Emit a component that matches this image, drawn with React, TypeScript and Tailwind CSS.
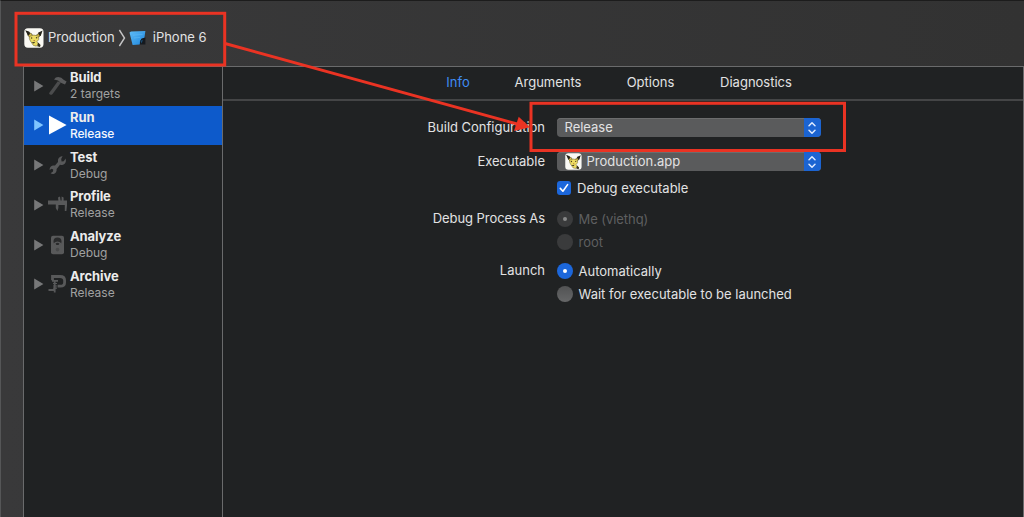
import React from "react";

type Scheme = { name: string; detail: string; icon: React.ReactNode; selected?: boolean };

const Hammer = () => (
  <svg width="20" height="20" viewBox="0 0 20 20">
    <path d="M9.8 5.2 12.8 6.8 4.4 18.2Q2.2 19.6 1 17.2Z" fill="#4b4c4d" />
    <path d="M6 3.4 7.8 1.4Q13 .2 15.6 3.8L18.6 5.4 17 8.6 14.6 7.4 12.4 6.6 10 4.6Z" fill="#5a5b5c" />
  </svg>
);
const Play = () => (
  <svg width="20" height="20" viewBox="0 0 20 20" fill="#fff">
    <path d="M1 .6 18.6 10 1 19.4Z" />
  </svg>
);
const Wrench = () => (
  <svg width="20" height="20" viewBox="0 0 20 20" fill="#58595a">
    <path d="M14.6 1 13.2 4 13.6 6.4 15.8 6.2 17.6 3.4Q18.8 7.6 15.6 9.4 13.4 10.2 12 9.8L8.6 14Q9 17.2 6.2 18.8 4 19.4 2.6 18.2L5 16.6 5.2 14.6 3.6 13.8 1.6 15Q1.6 11.4 5 10.6 6.2 10.4 7 10.6L10 7Q9.2 2.2 14.6 1Z" />
  </svg>
);
const Caliper = () => (
  <svg width="20" height="20" viewBox="0 0 20 20" fill="#58595a">
    <path d="M0 5.6H10.4L10 2.4 12 1.6 12.6 5.6H13.6V1.6L15.6 2.4V5.6H19V10.4L18.4 16 16.8 16V10H10.4V13L9.4 16 7.8 13V9.4H0Z" />
  </svg>
);
const Gauge = () => (
  <svg width="20" height="20" viewBox="0 0 20 20">
    <rect x="3" y=".7" width="13" height="18.6" rx="2" fill="#58595a" />
    <circle cx="9.5" cy="6.4" r="4" fill="#292a2b" />
    <path d="M5.6 8.2Q9.5 5 13.4 8.2L12.4 11H6.6Z" fill="#58595a" />
    <path d="M7.6 8.6Q9.5 7 11.4 8.6L10.6 10H8.4Z" fill="#292a2b" />
    <circle cx="9.5" cy="14.6" r="1.8" fill="#48494a" />
  </svg>
);
const Clamp = () => (
  <svg width="20" height="20" viewBox="0 0 20 20" fill="none" stroke="#58595a">
    <path d="M4.5 6.2V2.5H12Q16.6 2.5 16.6 6.5V8.5Q16.6 12.2 12.5 12.2H9.6" strokeWidth="2.8" />
    <path d="M6.7 6.5V18.5M.5 16H7.5M4 6.8H10" strokeWidth="1.8" />
    <path d="M5 9.5H9M5 12H9M5 14.2H9" strokeWidth="1.2" />
  </svg>
);

const AppIcon = ({ size }: { size: number }) => (
  <svg width={size} height={size} viewBox="0 0 20 20" className="shrink-0">
    <rect x=".3" y=".3" width="19.2" height="19.4" rx="3.6" fill="#faf9f4" />
    <path d="M3.2 3.6 8 6 8.6 9 6 9.6 4 7.4ZM17 4.4 12.6 6.8 12 9 14.4 9.4 16.4 7.6Z" fill="#d9c04c" stroke="#3c351d" strokeWidth=".6" />
    <path d="M1.2 2.2 5.4 3.8 6 6 4.2 7.8ZM18.6 2.6 14 4.8 15.2 7.6 16.6 8Z" fill="#24231b" />
    <path d="M5.4 8.4Q9.8 5.8 14.6 8.2L14.8 11.4 13 13.6 14.2 16 12.4 18.2 9.4 17.4 6.4 13Q4.8 10.4 5.4 8.4Z" fill="#ecdc62" stroke="#5b5026" strokeWidth=".5" />
    <path d="M7.4 14.4 11.4 13.8 9.8 15.6ZM14.2 14.6 16.6 17 16 19 13.2 18.2Z" fill="#34301c" />
    <circle cx="7.6" cy="10" r=".8" fill="#4b3e1b" />
    <circle cx="12.6" cy="9.8" r=".8" fill="#4b3e1b" />
    <path d="M9.2 12H11.2L10.2 12.9Z" fill="#a6512f" />
  </svg>
);

const XcodeIcon = () => (
  <svg width="18" height="16" viewBox="0 0 18 16" className="shrink-0">
    <defs>
      <linearGradient id="sheet" x1="0" y1="0" x2="1" y2="1">
        <stop offset="0" stopColor="#5fbcf6" />
        <stop offset="1" stopColor="#1c84dc" />
      </linearGradient>
    </defs>
    <path d="M10 8 16.4 7.5V14.4H10Z" fill="#15191e" />
    <path d="M.5 2.4 2 1.4 16.4 1 15.4 7.8 12.6 8.6 11 11 10.8 14.6 3.6 15Z" fill="url(#sheet)" />
    <path d="M4 5.2 13.6 4.4M5 8 11 7.4" stroke="#7ad0ff" strokeWidth=".7" opacity=".45" />
    <path d="M11.4 11 14 9.4 12.6 13.4Z" fill="#184c73" />
  </svg>
);

const schemes: Scheme[] = [
  { name: "Build", detail: "2 targets", icon: <Hammer /> },
  { name: "Run", detail: "Release", icon: <Play />, selected: true },
  { name: "Test", detail: "Debug", icon: <Wrench /> },
  { name: "Profile", detail: "Release", icon: <Caliper /> },
  { name: "Analyze", detail: "Debug", icon: <Gauge /> },
  { name: "Archive", detail: "Release", icon: <Clamp /> },
];

function SchemeRow({ name, detail, icon, selected }: Scheme) {
  return (
    <li className="flex h-[39.8px] items-start">
      <div className={"flex h-[39px] w-full items-center pl-[10px] " + (selected ? "bg-[#0d5acb]" : "")}>
        <svg width="10" height="12" viewBox="0 0 10 12" className="shrink-0">
          <path d="M.2.6 9.4 6 .2 11.4Z" fill={selected ? "#7fc5ff" : "#777879"} />
        </svg>
        <div className="ml-[3.5px] w-5 shrink-0">{icon}</div>
        <div className="ml-[2.5px] whitespace-nowrap">
          <div className="h-[17px] text-[13px] leading-[17px] font-bold tracking-[-0.1px] text-[#ececec]">{name}</div>
          <div className={"h-4 text-[12px] leading-4 " + (selected ? "font-medium tracking-[-0.15px] text-[#f3f7fd]" : "text-[#a0a1a1]")}>{detail}</div>
        </div>
      </div>
    </li>
  );
}

function Popup({ children }: { children: React.ReactNode }) {
  return (
    <div className="flex h-[19px] w-[264px] items-center overflow-hidden rounded-[4px] bg-[#5a5b5c] shadow-[inset_0_1px_0_#6c6d6e]">
      <div className="flex flex-1 items-center gap-[5px] pl-2">{children}</div>
      <div className="flex h-[19px] w-[17px] items-center justify-center bg-[#1b64d2]">
        <svg width="10" height="14" viewBox="0 0 10 14" fill="none" stroke="#dce9ff" strokeWidth="1.5" strokeLinecap="round" strokeLinejoin="round">
          <path d="M2 4.8 5 1.8 8 4.8M2 9.2 5 12.2 8 9.2" />
        </svg>
      </div>
    </div>
  );
}

function Radio({ label, on, disabled }: { label: string; on?: boolean; disabled?: boolean }) {
  const fill = disabled ? "bg-[#3a3b3c]" : on ? "bg-[#1c67db]" : "bg-linear-to-b from-[#525354] to-[#666768]";
  return (
    <div className="flex items-center">
      <span className={"mr-[5.5px] ml-[0.5px] flex size-4 items-center justify-center rounded-full " + fill}>
        {on && <span className={"size-1 rounded-full " + (disabled ? "bg-[#88898a]" : "bg-white")} />}
      </span>
      <span className={"relative top-[0.5px] " + (disabled ? "text-[#5e5f60]" : "")}>{label}</span>
    </div>
  );
}

function Field({ label = "", className, children }: { label?: string; className: string; children: React.ReactNode }) {
  return (
    <div className={"flex items-center whitespace-nowrap " + className}>
      <div className="mr-[11.5px] w-[322px] text-right">{label}</div>
      {children}
    </div>
  );
}

export default function App() {
  return (
    <div className="relative flex h-[517px] w-[1024px] flex-col overflow-hidden border-t border-l border-t-[#1c1c1c] border-l-[#555657] bg-linear-to-r from-[#39393a] to-[#323232] font-['Inter',sans-serif] text-[13px] text-[#e2e2e3]">
      <header className="flex h-[65px] shrink-0 items-center pt-[8px] pl-[23px] whitespace-nowrap">
        <AppIcon size={20} />
        <span className="ml-1">Production</span>
        <svg width="8" height="20" viewBox="0 0 8 20" fill="none" stroke="#c5c5c6" strokeWidth="1.4" className="ml-[3px]">
          <path d="M1.4 2 6.5 10 1.4 18" />
        </svg>
        <div className="ml-[3px]"><XcodeIcon /></div>
        <span className="ml-[6px]">iPhone 6</span>
      </header>
      <div className="ml-[22px] flex min-h-0 flex-1 border-t border-r border-l border-[#6a6b6c] bg-[#202223]">
        <ul className="-mt-px w-[199px] shrink-0 border-r border-[#6a6b6c]">
          {schemes.map((s) => <SchemeRow key={s.name} {...s} />)}
        </ul>
        <main className="flex-1">
          <nav className="flex h-[34px] items-center border-b-2 border-[#444546] pl-[195px] text-center">
            <span className="w-[80px] text-[#3f8cf4]">Info</span>
            <span className="w-[100px]">Arguments</span>
            <span className="w-[105px]">Options</span>
            <span className="w-[106px]">Diagnostics</span>
          </nav>
          <Field label="Build Configuration" className="mt-[17px] h-[19px] tracking-[-0.02px]"><Popup>Release</Popup></Field>
          <Field label="Executable" className="mt-[15px] h-[19px]">
            <Popup><AppIcon size={17} />Production.app</Popup>
          </Field>
          <Field className="mt-[7px] h-5">
            <span className="mr-[6px] ml-[0.5px] flex size-[14px] items-center justify-center rounded-[3px] bg-[#1c67db]">
              <svg width="10" height="10" viewBox="0 0 10 10" fill="none" stroke="#fff" strokeWidth="1.6" strokeLinecap="round" strokeLinejoin="round">
                <path d="M1.3 5.4 3.9 8.2 8.6 1.6" />
              </svg>
            </span>
            <span className="relative top-[0.5px]">Debug executable</span>
          </Field>
          <Field label="Debug Process As" className="mt-[11px] h-5 tracking-[-0.06px]"><Radio label="Me (viethq)" on disabled /></Field>
          <Field className="mt-[3px] h-5"><Radio label="root" disabled /></Field>
          <Field label="Launch" className="mt-[9px] h-5"><Radio label="Automatically" on /></Field>
          <Field className="mt-[3px] h-5"><Radio label="Wait for executable to be launched" /></Field>
        </main>
      </div>
      <svg width="1024" height="517" viewBox="0 0 1024 517" className="pointer-events-none absolute -top-px -left-px" fill="none" stroke="#ea3323" strokeWidth="3">
        <rect x="16" y="13.3" width="208.7" height="51.7" />
        <rect x="531" y="103.3" width="313.5" height="47.2" />
        <path d="M225 43.5 519 124.5" />
        <path d="M518.7 116.7 530 127.2 514 131Z" fill="#ea3323" stroke="none" />
      </svg>
    </div>
  );
}
